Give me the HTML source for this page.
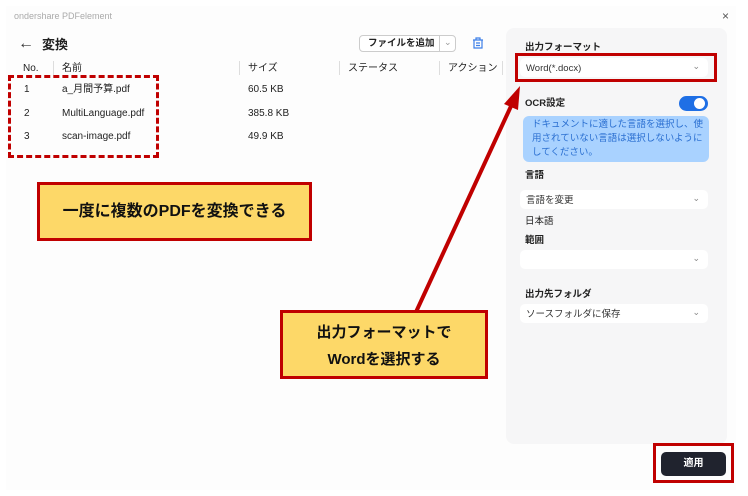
<!DOCTYPE html>
<html><head><meta charset="utf-8"><style>
*{margin:0;padding:0;box-sizing:border-box}
body{width:748px;height:496px;background:#fff;font-family:"Liberation Sans","Noto Sans CJK JP",sans-serif;position:relative;overflow:hidden;color:#222}
.win{position:absolute;left:6px;top:6px;width:730px;height:484px;background:#fdfdfd}
.a{position:absolute;white-space:nowrap;line-height:13px}
.s{font-size:10px}
.panel{position:absolute;left:506px;top:28px;width:221px;height:416px;background:#f6f6f7;border-radius:8px}
.dd{position:absolute;left:520px;width:188px;height:19px;background:#fff;border-radius:5px;font-size:9.5px;padding:3px 6px 0;line-height:16px;color:#333}
.dd:after{content:"⌄";position:absolute;right:8px;top:0;font-size:9px;color:#888}
.box{position:absolute;background:#fdd868;border:3px solid #c00000;font-weight:bold;color:#111;text-align:center}
</style></head><body>
<div class="win"></div>
<div class="a" style="left:14px;top:10px;font-size:9px;color:#aaa">ondershare PDFelement</div>
<div class="a" style="left:722px;top:10px;font-size:12px;color:#555">×</div>
<div class="a" style="left:18px;top:37px;font-size:16px;color:#333">←</div>
<div class="a" style="left:42px;top:37px;font-size:13px;font-weight:bold;line-height:16px">変換</div>
<div class="a" style="left:359px;top:35px;width:97px;height:17px;border:1px solid #ccc;border-radius:4px;background:#fff"></div>
<div class="a" style="left:368px;top:37px;font-size:9.5px;font-weight:bold">ファイルを追加</div>
<div class="a" style="left:439px;top:35px;width:1px;height:17px;background:#ccc"></div>
<div class="a" style="left:444px;top:36px;font-size:9px;color:#999">⌄</div>
<svg class="a" style="left:472px;top:37px" width="12" height="12" viewBox="0 0 12 12" fill="none" stroke="#3d7fe8" stroke-width="1.2"><path d="M1 3h10M4 3V1h4v2M2 3v8h8V3M4 6h4M4 8.5h4"/></svg>
<div class="a s" style="left:23px;top:62px">No.</div>
<div class="a" style="left:53px;top:61px;width:1px;height:14px;background:#ddd"></div>
<div class="a s" style="left:62px;top:62px">名前</div>
<div class="a" style="left:239px;top:61px;width:1px;height:14px;background:#ddd"></div>
<div class="a s" style="left:248px;top:62px">サイズ</div>
<div class="a" style="left:339px;top:61px;width:1px;height:14px;background:#ddd"></div>
<div class="a s" style="left:348px;top:62px">ステータス</div>
<div class="a" style="left:439px;top:61px;width:1px;height:14px;background:#ddd"></div>
<div class="a s" style="left:448px;top:62px">アクション</div>
<div class="a" style="left:502px;top:61px;width:1px;height:14px;background:#ddd"></div>
<div class="a s" style="left:24px;top:83px">1</div><div class="a s" style="left:62px;top:83px">a_月間予算.pdf</div><div class="a s" style="left:248px;top:83px">60.5 KB</div>
<div class="a s" style="left:24px;top:107px">2</div><div class="a s" style="left:62px;top:107px">MultiLanguage.pdf</div><div class="a s" style="left:248px;top:107px">385.8 KB</div>
<div class="a s" style="left:24px;top:130px">3</div><div class="a s" style="left:62px;top:130px">scan-image.pdf</div><div class="a s" style="left:248px;top:130px">49.9 KB</div>
<div class="a" style="left:8px;top:75px;width:151px;height:83px;border:3px dashed #c00000"></div>
<div class="box" style="left:37px;top:182px;width:275px;height:59px;font-size:16px;line-height:53px">一度に複数のPDFを変換できる</div>
<div class="panel"></div>
<div class="a" style="left:525px;top:41px;font-size:9.5px;font-weight:bold">出力フォーマット</div>
<div class="dd" style="top:58px">Word(*.docx)</div>
<div class="a" style="left:515px;top:53px;width:202px;height:29px;border:3px solid #c00000"></div>
<div class="a" style="left:525px;top:97px;font-size:9.5px;font-weight:bold">OCR設定</div>
<div class="a" style="left:679px;top:96px;width:29px;height:15px;border-radius:8px;background:#1f6fe5"></div>
<div class="a" style="left:694px;top:98px;width:11px;height:11px;border-radius:50%;background:#fff"></div>
<div class="a" style="left:523px;top:116px;width:186px;height:46px;background:#a9d2ff;border-radius:6px;font-size:9.5px;color:#2a6fd1;padding:2px 5px 0 9px;line-height:14px;white-space:normal">ドキュメントに適した言語を選択し、使用されていない言語は選択しないようにしてください。</div>
<div class="a" style="left:525px;top:169px;font-size:9.5px;font-weight:bold">言語</div>
<div class="dd" style="top:190px">言語を変更</div>
<div class="a" style="left:525px;top:215px;font-size:9.5px">日本語</div>
<div class="a" style="left:525px;top:234px;font-size:9.5px;font-weight:bold">範囲</div>
<div class="dd" style="top:250px"></div>
<div class="a" style="left:525px;top:288px;font-size:9.5px;font-weight:bold">出力先フォルダ</div>
<div class="dd" style="top:304px">ソースフォルダに保存</div>
<svg class="a" style="left:0;top:0" width="748" height="496"><path d="M416 312L512 104" stroke="#c00000" stroke-width="4"/><path d="M520 86L504 104L518 110Z" fill="#c00000"/></svg>
<div class="box" style="left:280px;top:310px;width:208px;height:69px;font-size:15px;line-height:27px;padding-top:6px">出力フォーマットで<br>Wordを選択する</div>
<div class="a" style="left:653px;top:443px;width:81px;height:40px;border:3px solid #c00000"></div>
<div class="a" style="left:661px;top:452px;width:65px;height:24px;background:#20232e;border-radius:5px;color:#fff;font-size:10px;font-weight:bold;text-align:center;line-height:24px">適用</div>
</body></html>
